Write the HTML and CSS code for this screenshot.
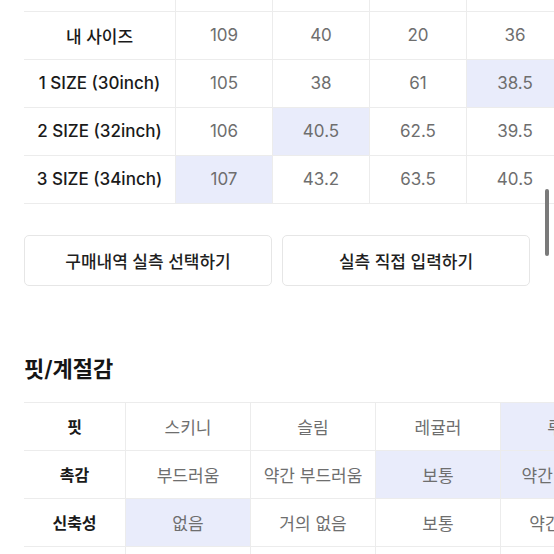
FILE: index.html
```html
<html lang="ko">
<head>
    <meta charset="UTF-8">
    <meta name="viewport" content="width=device-width, initial-scale=1.0">
    <link rel="stylesheet" href="styles.css">
    <title>실측 사이즈</title>
</head>
<body>
    <div class="Page">
        <table class="SizeTable">
            <tr class="HeadRow">
                <th></th>
                <td></td>
                <td></td>
                <td></td>
                <td></td>
            </tr>
            <tr>
                <th>내 사이즈</th>
                <td>109</td>
                <td>40</td>
                <td>20</td>
                <td>36</td>
            </tr>
            <tr>
                <th>1 SIZE (30inch)</th>
                <td>105</td>
                <td>38</td>
                <td>61</td>
                <td class="Pick">38.5</td>
            </tr>
            <tr>
                <th>2 SIZE (32inch)</th>
                <td>106</td>
                <td class="Pick">40.5</td>
                <td>62.5</td>
                <td>39.5</td>
            </tr>
            <tr>
                <th>3 SIZE (34inch)</th>
                <td class="Pick">107</td>
                <td>43.2</td>
                <td>63.5</td>
                <td>40.5</td>
            </tr>
        </table>

        <div class="BtnRow">
            <button class="SizeBtn">구매내역 실측 선택하기</button>
            <button class="SizeBtn">실측 직접 입력하기</button>
        </div>

        <h2 class="SecTitle">핏/계절감</h2>

        <table class="FitTable">
            <tr>
                <th>핏</th>
                <td>스키니</td>
                <td>슬림</td>
                <td>레귤러</td>
                <td class="Pick">루즈</td>
            </tr>
            <tr>
                <th>촉감</th>
                <td>부드러움</td>
                <td>약간 부드러움</td>
                <td class="Pick">보통</td>
                <td class="Pick">약간 뻣뻣함</td>
            </tr>
            <tr>
                <th>신축성</th>
                <td class="Pick">없음</td>
                <td>거의 없음</td>
                <td>보통</td>
                <td>약간 있음</td>
            </tr>
            <tr class="CutRow">
                <th></th>
                <td></td>
                <td></td>
                <td></td>
                <td></td>
            </tr>
        </table>
    </div>
    <div class="ScrollBar"></div>
</body>
</html>
```

FILE: styles.css
```css
body{
    margin: 0;
    background-color: white;
    font-family: Inter, "Noto Sans CJK KR", sans-serif;
    overflow: hidden;
    height: 554px;
}
.Page{
    width: 700px;
    padding-left: 24px;
    margin-top: -37px;
}
table{
    border-collapse: collapse;
    table-layout: fixed;
}
th, td{
    height: 48px;
    padding: 0;
    border-top: 1px solid #ececec;
    border-bottom: 1px solid #ececec;
    text-align: center;
    font-size: 17px;
    white-space: nowrap;
}
th{
    color: #1a1a1a;
    font-weight: 500;
}
td{
    color: #6e6e6e;
    font-weight: 400;
    border-left: 1px solid #ececec;
}
.Pick{
    background-color: #e9ecfb;
}
.SizeTable{
    width: 535px;
}
.SizeTable th{
    width: 151px;
}
.SizeTable td{
    width: 96px;
}
.HeadRow th, .HeadRow td{
    border-top: none;
}
.BtnRow{
    display: flex;
    gap: 10px;
    width: 506px;
    margin-top: 31px;
}
.SizeBtn{
    flex: 1;
    height: 51px;
    background-color: white;
    border: 1px solid #e6e6e6;
    border-radius: 5px;
    font-family: Inter, "Noto Sans CJK KR", sans-serif;
    font-size: 17px;
    font-weight: 500;
    color: #1f1f1f;
}
.SecTitle{
    margin: 68px 0 0 0;
    height: 30px;
    line-height: 30px;
    font-size: 22px;
    font-weight: 600;
    color: #151515;
}
.FitTable{
    margin-top: 18px;
    width: 597px;
}
.FitTable th{
    width: 101px;
    font-weight: 700;
    font-size: 16px;
}
.FitTable td{
    width: 124px;
}
.ScrollBar{
    position: absolute;
    left: 545px;
    top: 189px;
    width: 4px;
    height: 67px;
    border-radius: 2px;
    background-color: #7a7a7a;
}
```
